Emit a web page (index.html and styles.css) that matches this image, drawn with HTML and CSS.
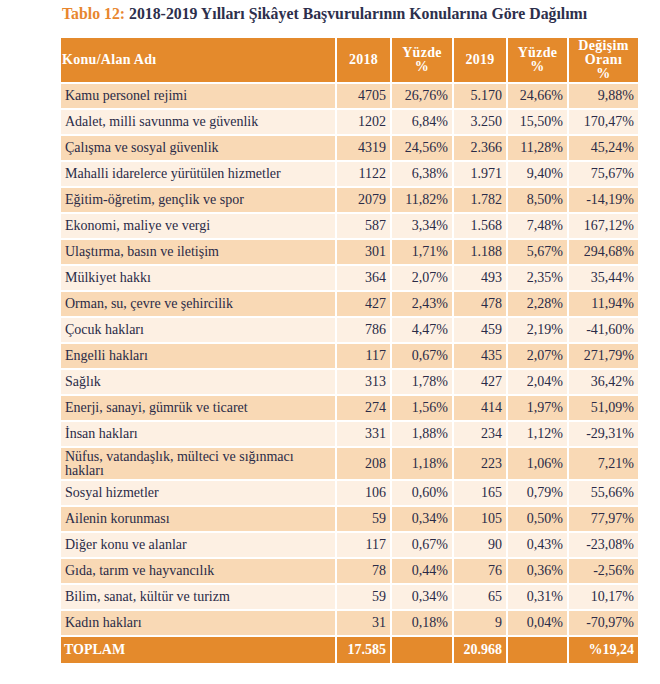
FILE: index.html
```html
<!DOCTYPE html>
<html lang="tr">
<head>
<meta charset="utf-8">
<title>Tablo 12</title>
<link rel="stylesheet" href="styles.css">
</head>
<body>
<div class="page">
  <h1 class="title"><span class="title-label">Tablo 12:</span> 2018-2019 Yılları Şikâyet Başvurularının Konularına Göre Dağılımı</h1>
  <table class="data">
    <colgroup>
      <col class="c-name"><col class="c-n1"><col class="c-p1"><col class="c-n2"><col class="c-p2"><col class="c-ch">
    </colgroup>
    <thead>
      <tr>
        <th class="left">Konu/Alan Adı</th>
        <th>2018</th>
        <th>Yüzde<br>%</th>
        <th>2019</th>
        <th>Yüzde<br>%</th>
        <th>Değişim<br>Oranı<br>%</th>
      </tr>
    </thead>
    <tbody>
      <tr><td>Kamu personel rejimi</td><td>4705</td><td>26,76%</td><td>5.170</td><td>24,66%</td><td>9,88%</td></tr>
      <tr><td>Adalet, milli savunma ve güvenlik</td><td>1202</td><td>6,84%</td><td>3.250</td><td>15,50%</td><td>170,47%</td></tr>
      <tr><td>Çalışma ve sosyal güvenlik</td><td>4319</td><td>24,56%</td><td>2.366</td><td>11,28%</td><td>45,24%</td></tr>
      <tr><td>Mahalli idarelerce yürütülen hizmetler</td><td>1122</td><td>6,38%</td><td>1.971</td><td>9,40%</td><td>75,67%</td></tr>
      <tr><td>Eğitim-öğretim, gençlik ve spor</td><td>2079</td><td>11,82%</td><td>1.782</td><td>8,50%</td><td>-14,19%</td></tr>
      <tr><td>Ekonomi, maliye ve vergi</td><td>587</td><td>3,34%</td><td>1.568</td><td>7,48%</td><td>167,12%</td></tr>
      <tr><td>Ulaştırma, basın ve iletişim</td><td>301</td><td>1,71%</td><td>1.188</td><td>5,67%</td><td>294,68%</td></tr>
      <tr><td>Mülkiyet hakkı</td><td>364</td><td>2,07%</td><td>493</td><td>2,35%</td><td>35,44%</td></tr>
      <tr><td>Orman, su, çevre ve şehircilik</td><td>427</td><td>2,43%</td><td>478</td><td>2,28%</td><td>11,94%</td></tr>
      <tr><td>Çocuk hakları</td><td>786</td><td>4,47%</td><td>459</td><td>2,19%</td><td>-41,60%</td></tr>
      <tr><td>Engelli hakları</td><td>117</td><td>0,67%</td><td>435</td><td>2,07%</td><td>271,79%</td></tr>
      <tr><td>Sağlık</td><td>313</td><td>1,78%</td><td>427</td><td>2,04%</td><td>36,42%</td></tr>
      <tr><td>Enerji, sanayi, gümrük ve ticaret</td><td>274</td><td>1,56%</td><td>414</td><td>1,97%</td><td>51,09%</td></tr>
      <tr><td>İnsan hakları</td><td>331</td><td>1,88%</td><td>234</td><td>1,12%</td><td>-29,31%</td></tr>
      <tr class="tall"><td>Nüfus, vatandaşlık, mülteci ve sığınmacı hakları</td><td>208</td><td>1,18%</td><td>223</td><td>1,06%</td><td>7,21%</td></tr>
      <tr><td>Sosyal hizmetler</td><td>106</td><td>0,60%</td><td>165</td><td>0,79%</td><td>55,66%</td></tr>
      <tr><td>Ailenin korunması</td><td>59</td><td>0,34%</td><td>105</td><td>0,50%</td><td>77,97%</td></tr>
      <tr><td>Diğer konu ve alanlar</td><td>117</td><td>0,67%</td><td>90</td><td>0,43%</td><td>-23,08%</td></tr>
      <tr><td>Gıda, tarım ve hayvancılık</td><td>78</td><td>0,44%</td><td>76</td><td>0,36%</td><td>-2,56%</td></tr>
      <tr><td>Bilim, sanat, kültür ve turizm</td><td>59</td><td>0,34%</td><td>65</td><td>0,31%</td><td>10,17%</td></tr>
      <tr><td>Kadın hakları</td><td>31</td><td>0,18%</td><td>9</td><td>0,04%</td><td>-70,97%</td></tr>
    </tbody>
    <tfoot>
      <tr><td>TOPLAM</td><td>17.585</td><td></td><td>20.968</td><td></td><td>%19,24</td></tr>
    </tfoot>
  </table>
</div>
</body>
</html>
```

FILE: styles.css
```css
html, body {
  margin: 0;
  padding: 0;
  background: #ffffff;
}

.page {
  padding: 4px 0 0 59px;
}

.title {
  margin: 0 0 12px 3px;
  font-family: "Liberation Serif", "Times New Roman", "DejaVu Serif", serif;
  font-size: 15.8px;
  line-height: 20px;
  font-weight: bold;
  color: #2d2f4c;
  white-space: nowrap;
}

.title-label {
  color: #e8862e;
}

.data {
  border-collapse: collapse;
  table-layout: fixed;
  width: 579px;
  font-family: "Liberation Serif", "Times New Roman", "DejaVu Serif", serif;
  font-size: 14px;
  color: #2a2b47;
}

.c-name { width: 276px; }
.c-n1 { width: 55px; }
.c-p1 { width: 62px; }
.c-n2 { width: 54px; }
.c-p2 { width: 61px; }
.c-ch { width: 71px; }

.data th,
.data td {
  border: 2px solid #ffffff;
  padding: 0 4px;
  vertical-align: middle;
}

.data th {
  background: #e48a2c;
  color: #ffffff;
  font-size: 14px;
  line-height: 14px;
  letter-spacing: 0.3px;
  font-weight: bold;
  text-align: center;
  height: 44px;
  padding: 0 1px;
}

.data th.left {
  text-align: left;
  padding-left: 1px;
}

.data td {
  height: 24px;
  text-align: right;
  line-height: 14px;
}

.data td:first-child {
  text-align: left;
  padding-left: 4px;
}

.data tbody tr:nth-child(odd) td {
  background: #f9d9b5;
}

.data tbody tr:nth-child(even) td {
  background: #fdf0e3;
}

.data tr.tall td {
  height: 31px;
  line-height: 14px;
}

.data tfoot td {
  background: #e48a2c;
  color: #ffffff;
  font-weight: bold;
  height: 26px;
  font-size: 14px;
}

.data tfoot td:first-child {
  padding-left: 3px;
}
```
